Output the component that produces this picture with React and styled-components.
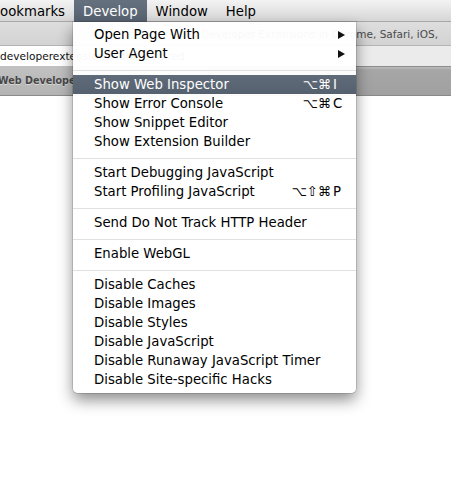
import React from "react";
import styled, { createGlobalStyle } from "styled-components";

const Global = createGlobalStyle`
  html, body { margin: 0; padding: 0; background: #fff; overflow: hidden; }
  * { box-sizing: border-box; }
`;

const FONT = `"DejaVu Sans", "Noto Sans", sans-serif`;

const Page = styled.div`
  position: relative;
  width: 451px;
  height: 477px;
  overflow: hidden;
  font-family: ${FONT};
  font-size: 13.25px;
  color: #000;
  background: #fff;
`;

const MenuBar = styled.div`
  display: flex;
  height: 22px;
  background: linear-gradient(#f3f3f3, #d6d6d6);
  border-bottom: 1px solid #a8a8a8;
  margin-left: -18px;
`;

const MenuTitle = styled.div`
  display: flex;
  align-items: center;
  padding: 0 9px;
  height: 22px;
  white-space: nowrap;
  color: ${(p) => (p.$active ? "#fff" : "#000")};
  background: ${(p) => (p.$active ? "linear-gradient(#66717f, #576270)" : "transparent")};
`;

const TitleBar = styled.div`
  height: 23px;
  display: flex;
  align-items: center;
  background: linear-gradient(#dedede, #d2d2d2);
  color: #4a4a4a;
  font-size: 10.5px;
  white-space: nowrap;
  padding-left: 175px;
`;

const AddressRow = styled.div`
  height: 21px;
  display: flex;
  background: #ebebeb;
  border-top: 1px solid #b4b4b4;
`;

const AddressField = styled.div`
  width: 300px;
  display: flex;
  align-items: center;
  background: #fff;
  white-space: nowrap;
  overflow: hidden;
  font-size: 10.6px;
  color: #111;
`;

const TabBar = styled.div`
  height: 30px;
  display: flex;
  background: linear-gradient(#8d8d8d 0, #8d8d8d 1px, #bdbdbd 1px, #a6a6a6 4px, #a1a1a1 100%);
  border-bottom: 1px solid #8a8a8a;
`;

const Tab = styled.div`
  width: 210px;
  display: flex;
  align-items: center;
  margin-left: -2px;
  background: linear-gradient(#c2c2c2, #b3b3b3);
  color: #474747;
  font-weight: bold;
  font-size: 9.6px;
  white-space: nowrap;
  overflow: hidden;
  text-shadow: 0 1px 0 rgba(255, 255, 255, 0.45);
`;

const Dropdown = styled.div`
  position: absolute;
  top: 22px;
  left: 73px;
  width: 283px;
  padding: 3px 0 4px;
  background: rgba(255, 255, 255, 0.965);
  border-radius: 0 0 5px 5px;
  box-shadow: 0 0 0 1px rgba(0, 0, 0, 0.12), 0 7px 15px rgba(0, 0, 0, 0.45);
`;

const Item = styled.div`
  display: flex;
  align-items: center;
  height: 19px;
  padding: 0 11px 0 21px;
  white-space: nowrap;
  color: ${(p) => (p.$selected ? "#fff" : "#000")};
  background: ${(p) => (p.$selected ? "linear-gradient(#606b7a, #56616f)" : "transparent")};
`;

const Label = styled.span`
  flex: 1;
`;

const Mods = styled.span`
  text-align: right;
  padding-right: 2px;
`;

const Key = styled.span`
  width: 12px;
`;

const Arrow = styled.span`
  width: 0;
  height: 0;
  border-top: 4.5px solid transparent;
  border-bottom: 4.5px solid transparent;
  border-left: 7px solid #111;
`;

const Separator = styled.div`
  padding: 7px 0 4px;
  &::after {
    content: "";
    display: block;
    height: 1px;
    background: #e1e1e1;
  }
`;

const groups = [
  [
    { label: "Open Page With", sub: true },
    { label: "User Agent", sub: true },
  ],
  [
    { label: "Show Web Inspector", mods: "⌥⌘", key: "I", selected: true },
    { label: "Show Error Console", mods: "⌥⌘", key: "C" },
    { label: "Show Snippet Editor" },
    { label: "Show Extension Builder" },
  ],
  [
    { label: "Start Debugging JavaScript" },
    { label: "Start Profiling JavaScript", mods: "⌥⇧⌘", key: "P" },
  ],
  [{ label: "Send Do Not Track HTTP Header" }],
  [{ label: "Enable WebGL" }],
  [
    { label: "Disable Caches" },
    { label: "Disable Images" },
    { label: "Disable Styles" },
    { label: "Disable JavaScript" },
    { label: "Disable Runaway JavaScript Timer" },
    { label: "Disable Site-specific Hacks" },
  ],
];

export default function App() {
  return (
    <Page>
      <Global />
      <MenuBar>
        <MenuTitle>Bookmarks</MenuTitle>
        <MenuTitle $active>Develop</MenuTitle>
        <MenuTitle>Window</MenuTitle>
        <MenuTitle>Help</MenuTitle>
      </MenuBar>
      <TitleBar>Web Developer Extensions in Chrome, Safari, iOS,</TitleBar>
      <AddressRow>
        <AddressField>developerextensions.com/featured</AddressField>
      </AddressRow>
      <TabBar>
        <Tab>Web Developer Extensions</Tab>
      </TabBar>
      <Dropdown>
        {groups.map((g, gi) => (
          <React.Fragment key={gi}>
            {gi > 0 && <Separator />}
            {g.map((it) => (
              <Item key={it.label} $selected={it.selected}>
                <Label>{it.label}</Label>
                {it.sub && <Arrow />}
                {it.mods && (
                  <>
                    <Mods>{it.mods}</Mods>
                    <Key>{it.key}</Key>
                  </>
                )}
              </Item>
            ))}
          </React.Fragment>
        ))}
      </Dropdown>
    </Page>
  );
}
